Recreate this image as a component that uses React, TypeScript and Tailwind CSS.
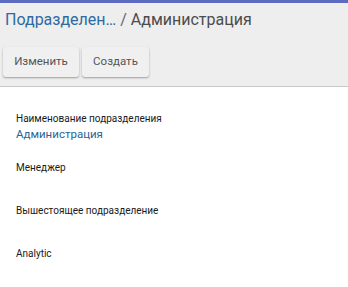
import React from "react";

const fields = [
  { label: "Наименование подразделения", value: "Администрация" },
  { label: "Менеджер", value: "" },
  { label: "Вышестоящее подразделение", value: "" },
  { label: "Analytic", value: "" },
];

export default function App() {
  return (
    <div className="w-[348px] h-[287px] bg-white font-['Roboto','Liberation_Sans',sans-serif] overflow-hidden">
      <div className="h-[3px] bg-[#5c6bc0]" />
      {/* control panel */}
      <div className="bg-[#eeeeee] border-b border-[#c8c8c8] pt-[5px] pb-[9px] px-[3px]">
        <div className="h-[24px] leading-[24px] text-[16px] pl-[2px] whitespace-nowrap">
          <span className="text-[#2d6aa0]">Подразделен…</span>
          <span className="text-[#666]"> / </span>
          <span className="text-[#4c4c4c]">Администрация</span>
        </div>
        <div className="flex gap-[3px] mt-[15px]">
          <button className="h-[30px] w-[76px] rounded-[3px] bg-[#f0f0f0] text-[11.5px] text-[#555] shadow-[0_1px_2px_rgba(0,0,0,0.35)]">
            Изменить
          </button>
          <button className="h-[30px] w-[67px] rounded-[3px] bg-[#f0f0f0] text-[11.5px] text-[#555] shadow-[0_1px_2px_rgba(0,0,0,0.35)]">
            Создать
          </button>
        </div>
      </div>
      {/* form sheet */}
      <div className="pt-[25px] px-[16px]">
        {fields.map((f) => (
          <div key={f.label} className={f.value ? "h-[49px]" : "h-[43px]"}>
            <div className="text-[10px] leading-[14px] text-[#1a1a1a]">{f.label}</div>
            {f.value && (
              <div className="text-[11.5px] leading-[16px] text-[#2a6496]">{f.value}</div>
            )}
          </div>
        ))}
      </div>
    </div>
  );
}
